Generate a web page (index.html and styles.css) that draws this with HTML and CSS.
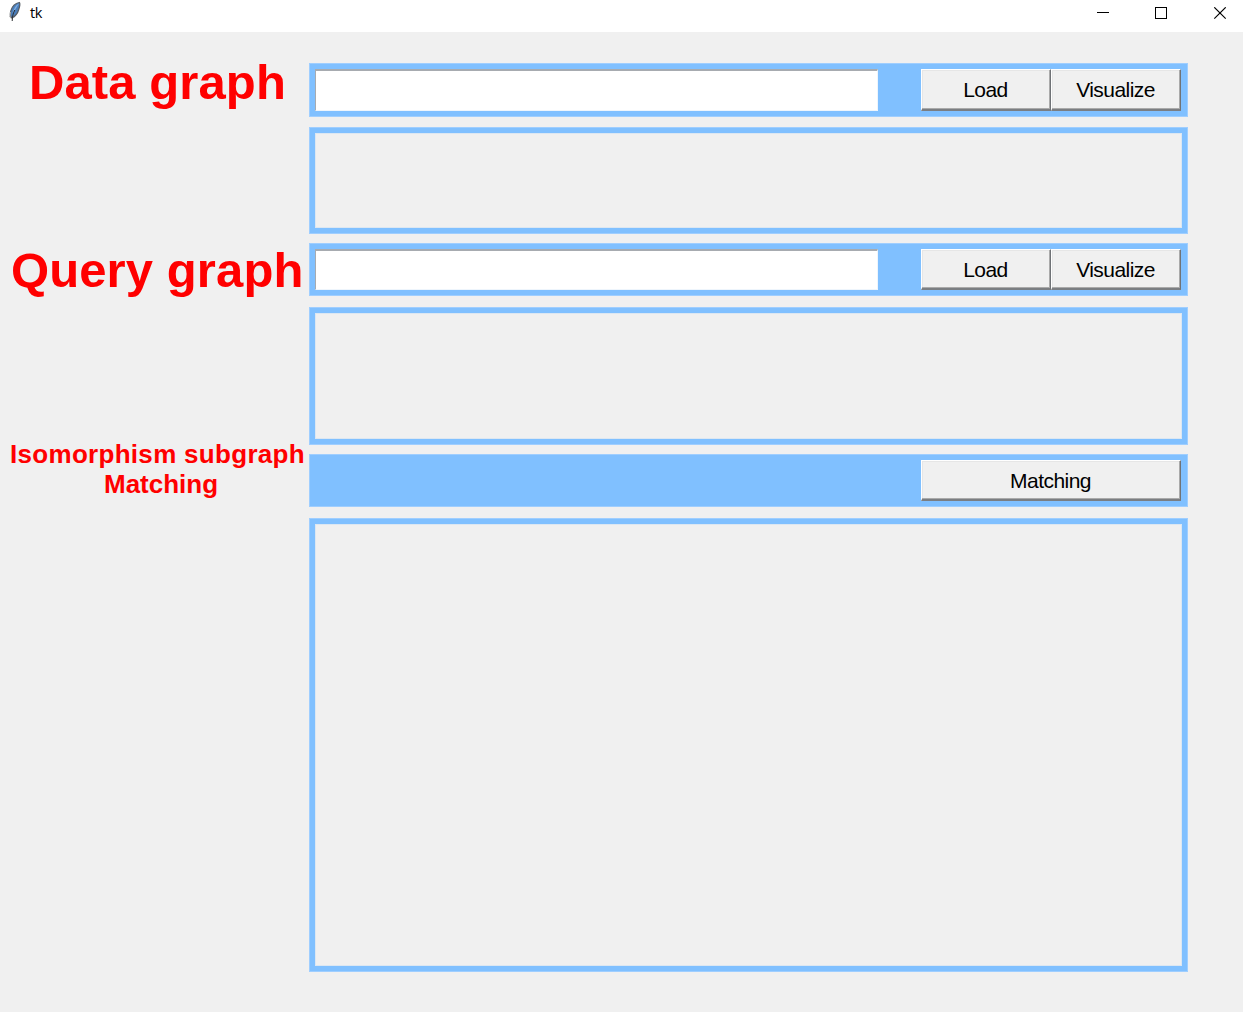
FILE: index.html
```html
<!DOCTYPE html>
<html lang="en">
<head>
<meta charset="utf-8">
<title>tk</title>
<link rel="stylesheet" href="styles.css">
</head>
<body>
<header class="titlebar">
  <svg class="feather" width="14" height="22" viewBox="0 0 14 22">
    <path d="M11.5 2.5C7.5 3 4 6.5 2.8 11C2 14 2.3 16.5 3.8 18C7 16.5 9.6 13.5 10.6 10C11.6 7 12.5 4 11.5 2.5Z" fill="#4a7ebb" stroke="#555b62" stroke-width="1.2"/>
    <path d="M11 3.5C8 5 5.6 9 4.6 13L7 10Z" fill="#82afe0"/>
    <path d="M6.8 10C5.2 13 4.4 16 4.2 21" fill="none" stroke="#292d31"/>
    <path d="M2.5 12L1.8 17L4 19" fill="none" stroke="#aaa"/>
  </svg>
  <span class="title">tk</span>
  <svg class="controls" width="130" height="14" viewBox="0 0 130 14" fill="none" stroke="#000">
    <path d="M0 5.5H12M58.5 .5H69.5V11.5H58.5Z" shape-rendering="crispEdges"/>
    <path d="M117.3 .3L128.7 11.7M128.7 .3L117.3 11.7" stroke-width="1.15"/>
  </svg>
</header>
<main class="layout">
  <section class="group data">
    <h1 class="label">Data graph</h1>
    <div class="column">
      <div class="bar"><input class="entry" type="text" aria-label="Data graph"><div class="buttons"><button>Load</button><button>Visualize</button></div></div>
      <div class="output"></div>
    </div>
  </section>
  <section class="group query">
    <h1 class="label">Query graph</h1>
    <div class="column">
      <div class="bar"><input class="entry" type="text" aria-label="Query graph"><div class="buttons"><button>Load</button><button>Visualize</button></div></div>
      <div class="output"></div>
    </div>
  </section>
  <section class="group match">
    <h2 class="label"><span class="first">Isomorphism subgraph</span><span class="second">Matching</span></h2>
    <div class="column">
      <div class="bar"><div class="buttons"><button>Matching</button></div></div>
      <div class="output"></div>
    </div>
  </section>
</main>
</body>
</html>
```
FILE: styles.css
```css
* { box-sizing: border-box; }
body {
  margin: 0;
  height: 1012px;
  background: #f0f0f0;
  font-family: "Liberation Sans", Arial, sans-serif;
  overflow: hidden;
}
.titlebar {
  height: 32px;
  background: #fff;
  display: flex;
  align-items: flex-start;
  padding-left: 8px;
}
.title {
  font: 14.5px/20px "Open Sans", sans-serif;
  letter-spacing: -0.3px;
  margin: 3px 0 0 8px;
}
.controls { margin: 7px 16px 0 auto; }
.layout { padding-top: 31px; }
.group { display: grid; grid-template-columns: 309px 879px; }
.column { display: flex; flex-direction: column; }
.bar {
  height: 53px;
  background: #80c0ff;
  border: 1px solid #9fceff;
  padding: 5px 6px 5px 5px;
  display: flex;
}
.data .bar { height: 54px; }
.output {
  margin-top: 11px;
  border: 6px solid #80c0ff;
  outline: 1px solid #9fceff;
  outline-offset: -1px;
  box-shadow: inset 0 0 0 1px #dce7f2;
}
.data .output { margin-top: 10px; height: 107px; }
.query { margin-top: 9px; }
.query .output { height: 138px; }
.match { margin-top: 9px; }
.match .output { height: 454px; }
.entry {
  width: 563px;
  height: 100%;
  border: solid;
  border-width: 2px 1px 1px 1px;
  border-color: #a7abb0 #eef5fc #eef5fc #a7abb0;
  background: #fff;
  padding: 0;
  border-radius: 0;
}
.buttons { display: flex; width: 260px; margin-left: auto; }
button {
  flex: 1;
  min-width: 0;
  padding: 1px 1px 0 0;
  background: #f0f0f0;
  border: solid;
  border-width: 1px 1px 2px 1px;
  border-color: #fff #6f7276 #7b7e82 #fff;
  box-shadow: inset -1px -1px #aaa, inset 1px 1px #e6e6e6;
  border-radius: 0;
  font: 21px/24px "Liberation Sans", Arial, sans-serif;
  letter-spacing: -0.55px;
  color: #000;
}
.label { margin: 0; font-weight: bold; color: #f00; white-space: nowrap; }
.data .label { font-size: 49px; line-height: 56px; padding-left: 29px; margin-top: -9px; letter-spacing: 0.1px; }
.query .label { font-size: 49px; line-height: 56px; padding-left: 11px; margin-top: -1px; letter-spacing: 0.1px; }
.match .label { font-size: 26px; line-height: 30px; padding-left: 10px; margin-top: -15px; }
.label span { display: block; }
.label .first { letter-spacing: 0.3px; }
.label .second { padding-left: 94px; }
```
